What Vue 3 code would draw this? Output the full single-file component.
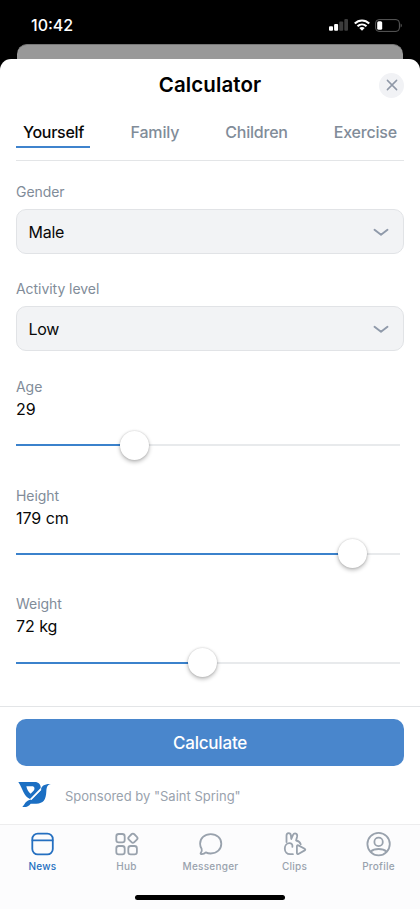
<script setup>
import { ref } from 'vue'

const tabs = ['Yourself', 'Family', 'Children', 'Exercise']
const activeTab = ref('Yourself')
const selects = [
  { label: 'Gender', value: 'Male' },
  { label: 'Activity level', value: 'Low' },
]
const sliders = [
  { label: 'Age', value: '29', percent: 30.8 },
  { label: 'Height', value: '179 cm', percent: 87.5 },
  { label: 'Weight', value: '72 kg', percent: 48.6 },
]
const nav = ['News', 'Hub', 'Messenger', 'Clips', 'Profile']
</script>

<template>
  <div class="screen">
    <div class="status">
      <span class="time">10:42</span>
      <div class="indicators">
        <svg class="signal" width="19" height="12" viewBox="0 0 19 12">
          <rect x="0" y="7.2" width="4" height="4.6" rx="1" fill="#fff" />
          <rect x="5.1" y="5" width="4" height="6.8" rx="1" fill="#fff" />
          <rect x="10.2" y="2.4" width="4" height="9.4" rx="1" fill="#3c3c3c" />
          <rect x="15.3" y="0" width="3.7" height="11.8" rx="1" fill="#3c3c3c" />
        </svg>
        <svg class="wifi" width="16" height="12" viewBox="0 0 16 12">
          <g fill="none" stroke="#fff" stroke-width="2.1">
            <path d="M.8 4.5C4.9.4 11.1.4 15.2 4.5" />
            <path d="M3.5 7.3c2.6-2.5 6.4-2.5 9 0" />
          </g>
          <path d="M8 11.7 5.3 9c1.5-1.4 3.9-1.4 5.4 0z" fill="#fff" />
        </svg>
        <svg class="battery" width="28" height="13" viewBox="0 0 28 13">
          <rect x=".6" y=".6" width="23.8" height="11.8" rx="3.4" fill="none" stroke="#5a5a5a" stroke-width="1" />
          <rect x="2.2" y="2.3" width="5" height="8.4" rx="1.5" fill="#fff" />
          <path d="M25.6 4.5c1.6.5 1.6 3.5 0 4z" fill="#5a5a5a" />
        </svg>
      </div>
    </div>
    <div class="backdrop"></div>
    <main class="sheet">
      <header class="head">
        <span></span>
        <h1>Calculator</h1>
        <button class="close" aria-label="Close">
          <svg width="12" height="12" viewBox="0 0 12 12"><path d="m1.4 1.4 9.2 9.2m0-9.2-9.2 9.2" /></svg>
        </button>
      </header>
      <nav class="tabs">
        <button v-for="t in tabs" :key="t" :class="['tab', { active: activeTab === t }]" @click="activeTab = t">{{ t }}</button>
      </nav>
      <section v-for="s in selects" :key="s.label" class="field">
        <div class="label">{{ s.label }}</div>
        <div class="select">
          <span>{{ s.value }}</span>
          <svg width="16" height="10" viewBox="0 0 16 10"><path d="m1.5 2.8 6.5 5 6.5-5" /></svg>
        </div>
      </section>
      <section v-for="s in sliders" :key="s.label" class="range">
        <div class="label">{{ s.label }}</div>
        <div class="value">{{ s.value }}</div>
        <div class="track">
          <div class="fill" :style="{ width: s.percent + '%' }"></div>
          <div class="thumb"></div>
          <div class="rest"></div>
        </div>
      </section>
      <footer class="actions">
        <button class="calculate">Calculate</button>
        <div class="sponsor">
          <svg width="35" height="28" viewBox="8 6 105 84">
            <path fill="#1b6fc3" fill-rule="evenodd" d="M12 12H61C73 12 80 20 79 30L47 63C28 56 25 31 12 12ZM36 25C38 35 42 42 49 47L59 37C62 32 60 25 54 25Z" />
            <path fill="#1b6fc3" d="M110 18C99 20 97 27 96 40C95 66 87 77 66 77H49C43 85 37 88 24 87C31 79 34 69 45 66L52 64L80 36C80 24 91 17 110 18Z" />
            <path fill="none" stroke="#fff" stroke-width="3.5" d="M80 34 50 65" />
          </svg>
          <span>Sponsored by "Saint Spring"</span>
        </div>
      </footer>
      <nav class="bottom">
        <a v-for="n in nav" :key="n" :class="['item', { current: n === 'News' }]">
          <svg width="28" height="28" viewBox="0 0 28 28">
            <template v-if="n === 'News'">
              <rect x="4.3" y="3.6" width="20.5" height="20.8" rx="5.5" />
              <path d="M4.5 10.3h20" />
            </template>
            <template v-else-if="n === 'Hub'">
              <rect x="4.3" y="4" width="8.4" height="8.4" rx="2.4" />
              <rect x="4.3" y="16" width="8.4" height="8.4" rx="2.4" />
              <rect x="16.3" y="16" width="8.6" height="8.4" rx="2.4" />
              <rect x="17.1" y="4.4" width="7.6" height="7.6" rx="2" transform="rotate(45 20.9 8.2)" />
            </template>
            <path v-else-if="n === 'Messenger'" d="M14.7 4.2c6.3 0 10.6 4.1 10.6 9.6s-4.3 9.7-10.6 9.7c-1.9 0-3.5-.4-4.9-1.1-1.2 1.3-2.7 1.900-4.700 1.700-.6-.1-.7-.7-.3-1.100 1-1.200 1.300-2.700.8-4.200a9 9 0 0 1-1.500-5C4.100 8.300 8.400 4.200 14.700 4.200Z" />
            <template v-else-if="n === 'Clips'">
              <path d="M6.5 12V5.800C6.500 2.400 10.600 2.400 10.900 5.600L11.300 9 12.900 5.200C14.300 2.300 17.800 3.300 17.100 6.500L16.100 10.500C18.600 11 20.100 12.500 20.700 14.300" />
              <path d="M12.400 16.900c.4-2.300-.9-3.700-3-3.700-2.700 0-4.600 2.300-4.600 5.400 0 3.300 2.200 5.600 5.300 5.600h2.800" />
              <path d="M16.900 16.300c0-.9.8-1.300 1.500-.9l6.300 3.400c.8.400.8 1.200 0 1.600l-6.300 3.600c-.7.400-1.500 0-1.500-.9Z" />
            </template>
            <template v-else>
              <circle cx="14.6" cy="14.1" r="11.2" />
              <circle cx="14.6" cy="11.900" r="4.200" />
              <path d="M6.800 21.500c1.800-1.700 4.600-2.500 7.800-2.500s6 .8 7.800 2.500" />
            </template>
          </svg>
          <span>{{ n }}</span>
        </a>
      </nav>
      <div class="home"><i></i></div>
    </main>
  </div>
</template>

<style>
body { margin: 0; background: #000; }
</style>

<style scoped>
* { box-sizing: border-box; }
button { border: 0; padding: 0; background: none; font: inherit; }
.screen {
  width: 420px;
  height: 909px;
  overflow: hidden;
  display: flex;
  flex-direction: column;
  background: #000;
  font-family: Inter, "Liberation Sans", sans-serif;
  color: #080808;
}
.status {
  height: 44px;
  flex: none;
  display: flex;
  justify-content: space-between;
  padding: 15px 17px 0 30px;
}
.time { color: #fff; font-size: 16px; line-height: 21px; font-weight: 500; padding-left: 1px; }
.indicators { display: flex; height: 20px; align-items: center; }
.wifi { margin: 0 4px 0 6px; }
.battery { margin-left: 1px; }
.backdrop { height: 15px; flex: none; margin: 0 17px; background: #999; border-radius: 10px 10px 0 0; border-top: 1px solid #777; }
.sheet { flex: 1; display: flex; flex-direction: column; background: #fff; border-radius: 11px 11px 0 0; overflow: hidden; }
.head { height: 52px; flex: none; display: grid; grid-template-columns: 25px 1fr 25px; align-items: center; padding: 0 16px; }
h1 { margin: 0; text-align: center; font-size: 20.5px; line-height: 26px; font-weight: 600; letter-spacing: 0.1px; color: #000; }
.close { width: 25px; height: 25px; border-radius: 50%; background: #f1f2f5; display: grid; place-items: center; }
.close svg { fill: none; stroke: #8f98a7; stroke-width: 1.5; stroke-linecap: round; }
.tabs { height: 50px; flex: none; margin: 0 16px; display: flex; justify-content: space-between; align-items: flex-start; border-bottom: 1px solid #e3e5e7; }
.tab { height: 37px; padding: 0 7px; line-height: 42px; font-size: 16px; font-weight: 500; color: #818c99; border-bottom: 2px solid transparent; letter-spacing: -0.2px; white-space: nowrap; }
.active { color: #080808; border-color: #3f83cd; padding-right: 6px; margin-right: 1.5px; letter-spacing: -0.28px; }
.field { height: 97.4px; flex: none; padding: 21px 16px 0; }
.label { height: 20px; line-height: 20px; font-size: 14px; color: #818c99; letter-spacing: -0.05px; }
.select { margin-top: 7px; height: 45px; padding: 0 14px 0 11.5px; display: flex; align-items: center; justify-content: space-between; border: 1px solid #e1e3e6; border-radius: 10px; background: #f2f3f5; font-size: 16px; letter-spacing: -0.25px; }
.select svg { fill: none; stroke: #909aaa; stroke-width: 1.9; stroke-linecap: round; stroke-linejoin: round; }
.range { height: 108.8px; flex: none; padding: 21px 20px 0 16px; }
.value { height: 24px; line-height: 24px; font-size: 16px; letter-spacing: -0.05px; }
.track { display: flex; align-items: center; height: 30px; margin-top: 9.3px; }
.fill { height: 2px; background: #3b82cc; }
.thumb { width: 29px; height: 29px; flex: none; margin: 0 -14.5px; border-radius: 50%; background: #fff; box-shadow: 0 2px 4px rgba(0, 0, 0, .28), 0 0 2px rgba(0, 0, 0, .18); z-index: 1; }
.rest { flex: 1; height: 2px; background: #e8eaec; }
.actions { height: 118px; flex: none; margin-top: 24.3px; padding: 12px 16px 0; border-top: 1px solid #e3e5e7; }
.calculate { display: block; width: 100%; height: 47px; padding-top: 1px; border-radius: 10px; background: #4986cc; color: #fff; font-size: 17px; font-weight: 500; letter-spacing: -0.2px; }
.sponsor { display: flex; align-items: center; height: 56px; padding-left: 1px; }
.sponsor span { margin-left: 13px; font-size: 13px; color: #99a2ad; padding-top: 3px; }
.bottom { height: 60px; flex: none; display: grid; grid-template-columns: repeat(5, 84px); border-top: 1px solid #ededee; background: #fcfcfd; }
.item { display: flex; flex-direction: column; align-items: center; padding-top: 5px; color: #99a2ad; font-size: 10px; line-height: 14px; font-weight: 500; letter-spacing: 0.25px; }
.item svg { flex: none; fill: none; stroke: currentColor; stroke-width: 1.8; stroke-linecap: round; stroke-linejoin: round; }
.item span { margin-top: 1px; padding-left: 1px; }
.current { color: #246fc0; }
.home { flex: 1; display: flex; justify-content: center; background: #fcfcfd; padding-top: 11px; }
.home i { width: 150px; height: 5px; border-radius: 3px; background: #000; }
</style>
